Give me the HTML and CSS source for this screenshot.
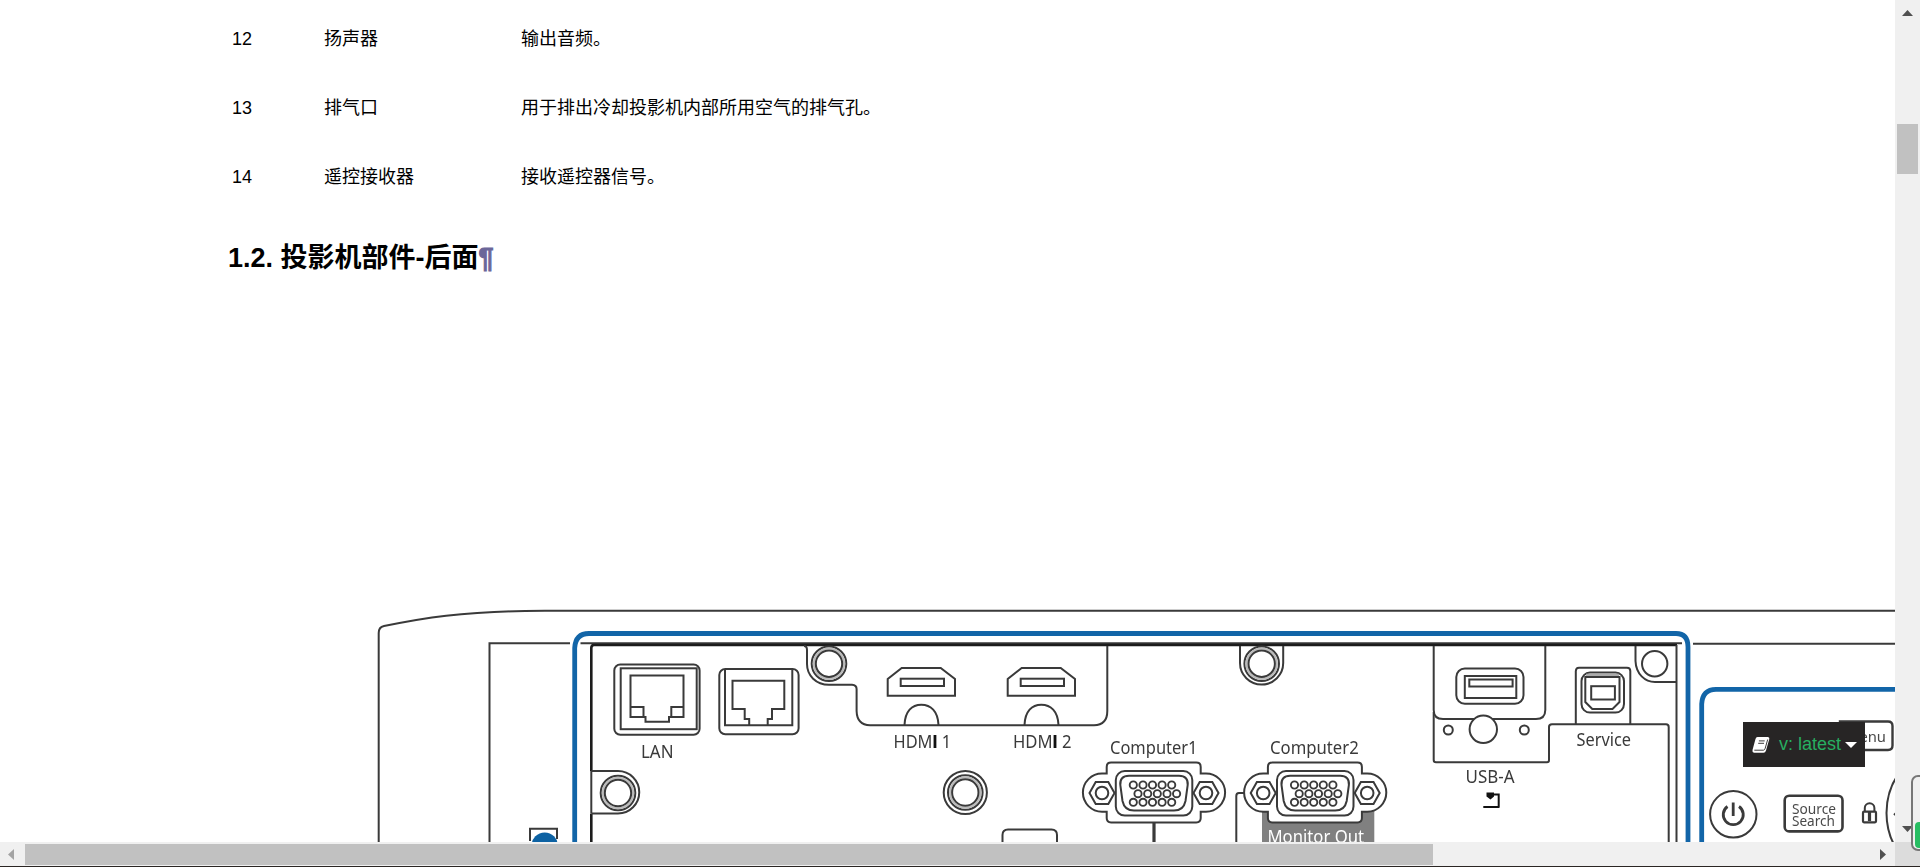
FILE: index.html
```html
<!DOCTYPE html>
<html lang="zh-CN">
<head>
<meta charset="utf-8">
<title>投影机部件</title>
<link rel="stylesheet" href="styles.css">
</head>
<body>
<div class="window">
  <main class="content">
    <div class="parts">
      <div class="row"><span>12</span><span>扬声器</span><span>输出音频。</span></div>
      <div class="row"><span>13</span><span>排气口</span><span>用于排出冷却投影机内部所用空气的排气孔。</span></div>
      <div class="row"><span>14</span><span>遥控接收器</span><span>接收遥控器信号。</span></div>
    </div>
    <h2 class="heading">1.2. 投影机部件-后面<a class="headerlink">¶</a></h2>
    <svg class="diagram" width="1895" height="252" viewBox="0 590 1895 252">
      <defs>
        <g id="hdmi">
          <path d="M901.7 668H940.7L955 679V695.7H887.7V679Z"/>
          <rect x="900.7" y="678.7" width="43.3" height="7.3"/>
          <path d="M904.5 725C905 711 912 704.7 921.3 704.7S938 711 938.5 725"/>
        </g>
        <g id="screw"><circle r="17.3"/><circle r="15.2" stroke="#bbb"/><circle r="13.2"/></g>
        <g id="vga">
          <path fill="#fff" d="M1106.7 773.5V767q0-4.4 4.4-4.4H1196.3q4.4 0 4.4 4.4V773.5H1206A19.1 19.1 0 0 1 1206 811.7H1200.7V818q0 4.4-4.4 4.4H1111.1q-4.4 0-4.4-4.4V811.7H1102A19.1 19.1 0 0 1 1102 773.5Z"/>
          <path d="M1089.5 793L1095.7 782H1108.3L1114.5 793L1108.3 804H1095.7ZM1193.5 793L1199.7 782H1212.3L1218.5 793L1212.3 804H1199.7Z"/>
          <circle cx="1102" cy="793" r="6.3"/><circle cx="1206" cy="793" r="6.3"/>
          <rect x="1115.8" y="771" width="76.5" height="44.6" rx="9"/>
          <path d="M1129 775.8H1179Q1188.5 776 1187.7 785L1185.5 801Q1183.5 810.6 1174 810.6H1134Q1124.5 810.6 1122.5 801L1120.3 785Q1119.5 776 1129 775.8Z"/>
          <g stroke-width="1.9">
            <circle cx="1133.3" cy="785" r="3.6"/><circle cx="1143" cy="785" r="3.6"/><circle cx="1152.5" cy="785" r="3.6"/><circle cx="1162.1" cy="785" r="3.6"/><circle cx="1171.7" cy="785" r="3.6"/>
            <circle cx="1138" cy="793.7" r="3.6"/><circle cx="1147.7" cy="793.7" r="3.6"/><circle cx="1157.3" cy="793.7" r="3.6"/><circle cx="1167" cy="793.7" r="3.6"/><circle cx="1176.6" cy="793.7" r="3.6"/>
            <circle cx="1133.3" cy="802.3" r="3.6"/><circle cx="1143" cy="802.3" r="3.6"/><circle cx="1152.5" cy="802.3" r="3.6"/><circle cx="1162.1" cy="802.3" r="3.6"/><circle cx="1171.7" cy="802.3" r="3.6"/>
          </g>
        </g>
      </defs>
      <g class="line">
        <path d="M378.7 842V633Q378.7 627 384 626C420 618.5 460 611 545 610.7H1895"/>
        <path d="M489.5 842V643.3H570M580.5 643.3H1682M1693 643.7H1895"/>
        <path class="thick" d="M1677 645H594Q591.3 645 591.3 648V771M591.3 813.5V842"/>
        <path d="M591.3 771V813M591.3 771H618A21.2 21.2 0 0 1 618 813.5H591.3"/>
        <use href="#screw" x="618" y="793"/>
        <path d="M530 841V828.7H557V839"/>

        <rect x="614.3" y="664.5" width="85.3" height="70.3" rx="6"/>
        <rect x="620.7" y="668.3" width="76" height="60.9"/>
        <path d="M630.5 675.5H683.5V717H669V721.7H645.5V717H630.5ZM630.5 707H643.5V717M683.5 707H671.3V717"/>
        <rect x="719.3" y="669" width="79.3" height="65.2" rx="6"/>
        <path d="M725 669V725.3H792.3V669M749.2 725V719H744.7V709H732.5V680.7H784.3V709H772V719H767.7V725"/>
        <path d="M804 646Q807 646 807 650V664C807 675.5 816 684.7 829 684.7H852Q856.6 685 856.6 689V711Q857 725 870 725.2H1094Q1107.3 725 1107.3 711V646"/>
        <use href="#screw" x="829" y="663.7"/>
        <use href="#hdmi"/><use href="#hdmi" x="120"/>
        <use href="#screw" x="965.3" y="792.5"/><circle cx="965.3" cy="792.5" r="21.6"/>
        <path d="M1002.5 842V835Q1002.5 829.5 1008 829.5H1051.5Q1057 829.5 1057 835V842"/>
        <path d="M1240 646V663A21.6 21.6 0 0 0 1283.2 663V646"/>
        <use href="#screw" x="1261.7" y="663.7"/>

        <path d="M1154 822V842" stroke-width="3.2"/>
        <path d="M1245 793H1239Q1236.3 793 1236.3 796V842"/>
        <rect x="1262" y="805" width="112.3" height="40" fill="#808080" stroke="none"/>
        <use href="#vga"/><use href="#vga" x="161.2"/>

        <path d="M1433.7 646V710Q1433.7 719 1443 719H1536Q1545.3 719 1545.3 710V646"/>
        <path d="M1433.7 712V760Q1433.7 762.3 1436 762.3H1547Q1549 762.3 1549 760V727Q1549 724.3 1552 724.3H1666Q1668.7 724.3 1668.7 727V842M1676.5 645V842"/>
        <rect x="1456.3" y="668.5" width="67.2" height="35.2" rx="8.5"/>
        <rect x="1464.8" y="676" width="51.5" height="22"/><rect x="1469.3" y="679.5" width="43.3" height="7"/>
        <circle cx="1483.3" cy="729.3" r="13.7" fill="#fff"/><circle cx="1448.3" cy="730" r="4.5"/><circle cx="1524.3" cy="730" r="4.5"/>
        <path d="M1575.8 724V671Q1576 667.7 1579 667.7H1627Q1630.3 667.7 1630.3 671V724"/>
        <rect x="1581.5" y="672.6" width="42.5" height="40" rx="8.5"/>
        <path d="M1586 675H1619" stroke="#aaa" stroke-width="2.4"/>
        <path d="M1585.3 677H1619.5V702L1612.5 709H1592.3L1585.3 702Z"/>
        <rect x="1591.2" y="686.2" width="23.7" height="13.3"/>
        <path d="M1635.5 646V661C1636 674 1645 682 1655 682H1676"/><circle cx="1654.7" cy="663.7" r="12.7"/>
        <path d="M1483.3 807H1499.5M1498.7 807V794.5H1490" stroke="#111"/>
        <path d="M1486.5 792.5H1494V796.5L1490.5 799.5L1486.500 796.500Z" fill="#111" stroke="none"/>

        <path d="M1840 721.5H1888Q1892.5 721.5 1892.5 726V745.5Q1892.5 750 1888 750H1840Z" stroke-width="2.4"/>
        <circle cx="1733.3" cy="814.3" r="23.2"/>
        <path d="M1727.5 806.5A10 10 0 1 0 1739 806.5M1733.2 802.5V816" stroke-width="2.8"/>
        <rect x="1784.7" y="795.7" width="57.8" height="35.7" rx="4.5" stroke-width="2.6"/>
        <path d="M1864.8 811V808A4.800 4.800 0 0 1 1874.400 808V811"/>
        <rect x="1863" y="811.700" width="13" height="10.600" rx="1" stroke-width="2.200"/>
        <path d="M1869.500 812V821" stroke-width="3.200"/>
        <circle cx="1955.500" cy="813" r="69"/><path d="M1894 815L1896 813"/>
      </g>
      <g class="blue">
        <path d="M574.7 842V648Q575.5 633.5 589 633.5H1676Q1688 633.5 1688 647V842"/>
        <path d="M1701.7 842V704Q1702.5 689.3 1716 689.3H1895"/>
        <circle cx="544.7" cy="845.7" r="13.2"/>
      </g>
      <g class="label">
        <text x="641" y="757.7" textLength="32.5" lengthAdjust="spacingAndGlyphs">LAN</text>
        <text x="893.5" y="748" textLength="57.5" lengthAdjust="spacingAndGlyphs">HDM<tspan class="heavy">I</tspan> 1</text>
        <text x="1013" y="748" textLength="58.500" lengthAdjust="spacingAndGlyphs">HDM<tspan class="heavy">I</tspan> 2</text>
        <text x="1110" y="753.5" textLength="87.500" lengthAdjust="spacingAndGlyphs">Computer1</text>
        <text x="1270" y="753.5" textLength="88.700" lengthAdjust="spacingAndGlyphs">Computer2</text>
        <text class="inverse" x="1267.5" y="842.5" textLength="96.500" lengthAdjust="spacingAndGlyphs">Monitor Out</text>
        <text x="1465.5" y="783" textLength="49" lengthAdjust="spacingAndGlyphs">USB-A</text>
        <text x="1576.5" y="745.7" textLength="54.5" lengthAdjust="spacingAndGlyphs">Service</text>
        <g class="key">
          <text x="1846" y="741.5" textLength="40" lengthAdjust="spacingAndGlyphs">Menu</text>
          <text x="1792" y="813.7" textLength="44" lengthAdjust="spacingAndGlyphs">Source</text>
          <text x="1792" y="826" textLength="43" lengthAdjust="spacingAndGlyphs">Search</text>
        </g>
      </g>
    </svg>
  </main>
  <div class="vbar">
    <svg class="arrow" width="11" height="6" viewBox="0 0 11 6"><path d="M0 6L5.5 0L11 6Z"/></svg>
    <div class="vthumb"></div>
    <svg class="arrow" width="11" height="6" viewBox="0 0 11 6"><path d="M0 0H11L5.5 6Z"/></svg>
  </div>
  <div class="hbar">
    <svg class="arrow dim" width="6" height="11" viewBox="0 0 6 11"><path d="M6 0V11L0 5.5Z"/></svg>
    <div class="hthumb"></div>
    <svg class="arrow" width="6" height="11" viewBox="0 0 6 11"><path d="M0 0V11L6 5.5Z"/></svg>
  </div>
  <div class="corner"></div>
  <div class="version">
    <svg width="18" height="16" viewBox="0 0 18 16"><path fill="#fff" d="M5.5 0H16Q17.7.3 17.3 2L14 13.5Q13.4 15.7 11.5 15.7H2Q0 15.5.5 13L3.5 2Q4 0 5.5 0Z"/><path d="M6.9 3.900H12.700M6.200 6.300H12M2.300 13.200H11.500Q12.700 13 13.200 11.300L15.700 2.500" fill="none" stroke="#272525" stroke-width=".9"/></svg>
    <span>v: latest</span>
    <svg width="12" height="6" viewBox="0 0 12 6"><path fill="#fff" d="M0 0H12L6 6Z"/></svg>
  </div>
  <div class="meter"><div class="level"></div></div>
</div>
</body>
</html>
```
FILE: styles.css
```css
body { margin: 0; background: #fff; overflow: hidden; }
.window {
  position: relative;
  box-sizing: border-box;
  width: 1920px;
  height: 867px;
  display: grid;
  grid-template: 842px 24px / 1895px 25px;
  border-bottom: 1px solid #2a2523;
  overflow: hidden;
  font-family: "Liberation Sans", "Noto Sans CJK SC", sans-serif;
}
.content { display: flex; flex-direction: column; overflow: hidden; }
.parts { padding: 5px 0 0 232px; }
.row {
  display: grid;
  grid-template-columns: 92px 197px 1fr;
  height: 69px;
  align-items: center;
  font-size: 18px;
  line-height: 27px;
  color: #000;
}
.heading {
  margin: 26px 0 0 228px;
  height: 40px;
  font-size: 27px;
  line-height: 40px;
  font-weight: 700;
  color: #000;
}
.headerlink { color: #6b6699; -webkit-text-stroke: 1px #6b6699; }
.diagram { display: block; flex: none; margin-top: auto; }
.line, .label { filter: blur(0.4px); }
.line { fill: none; stroke: #3a3a3a; stroke-width: 2; }
.thick { stroke: #1c1c1c; stroke-width: 2.6; }
.blue { fill: none; stroke: #1265a8; stroke-width: 4.8; filter: blur(0.4px); }
.blue circle { fill: #0d62a3; stroke: none; }
.label { font-family: "Noto Sans", sans-serif; font-size: 17.5px; fill: #3a3a3a; }
.heavy { font-family: Roboto, sans-serif; font-weight: 900; fill: #111; }
.inverse { fill: #fff; }
.key { font-size: 15px; fill: #4a4a4a; }
.vbar {
  background: #f0f0f0;
  display: flex;
  flex-direction: column;
  align-items: center;
  padding: 10px 0;
  box-sizing: border-box;
}
.vthumb { width: 21px; height: 50px; margin: 108px 0 auto; background: #c1c1c1; }
.hbar {
  background: #f0f0f0;
  display: flex;
  align-items: center;
  padding: 0 9px 0 8px;
  box-sizing: border-box;
}
.hthumb { width: 1408px; height: 21px; margin: 0 auto 0 11px; background: #c1c1c1; }
.arrow { flex: none; fill: #505050; }
.dim { fill: #a3a3a3; }
.corner { background: #dcdcdc; }
.version {
  position: absolute;
  left: 1743px;
  top: 722px;
  width: 122px;
  height: 45px;
  box-sizing: border-box;
  padding: 0 8px 0 9px;
  display: flex;
  align-items: center;
  background: #272525;
  color: #27ae60;
  font-size: 18px;
  line-height: 45px;
}
.version svg { flex: none; }
.version span { margin: 0 4px 0 9px; white-space: nowrap; }
.meter {
  position: absolute;
  left: 1911px;
  top: 775px;
  width: 24px;
  height: 76px;
  box-sizing: border-box;
  padding: 0 2px 1px;
  border: 2px solid #777;
  border-radius: 7px;
  display: flex;
  align-items: flex-end;
  background: #f0f0f0;
}
.level { width: 16px; height: 26px; border-radius: 4px; background: #27bd62; }
```
